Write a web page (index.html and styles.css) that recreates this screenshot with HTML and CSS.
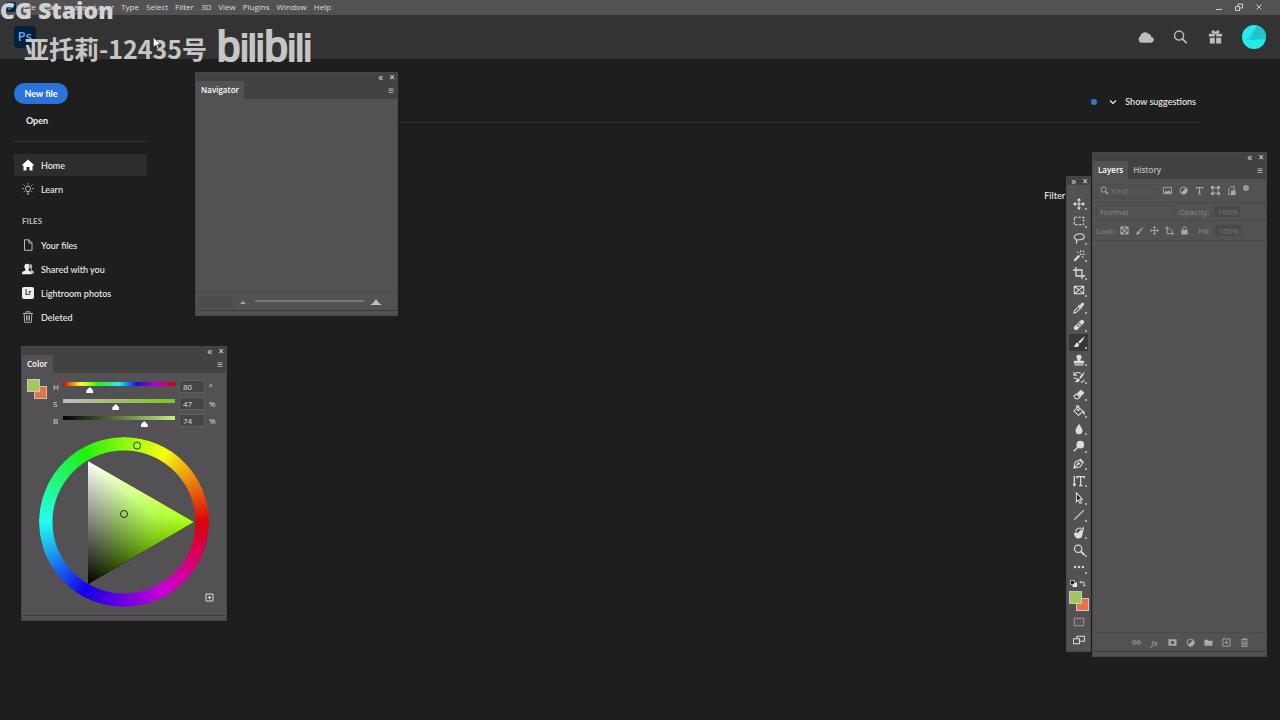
FILE: index.html
```html
<!DOCTYPE html>
<html lang="en">
<head>
  <meta charset="UTF-8">
  <meta name="viewport" content="width=device-width, initial-scale=1.0">
  <title>Photoshop</title>
  <link rel="stylesheet" href="styles.css">
</head>
<body>
  <header class="menubar">
    <svg class="app-icon" viewBox="0 0 10 10"><rect width="10" height="10" rx="2" fill="#0b2740"/><path d="M3 8V2h2a2 2 0 010 4H3" fill="none" stroke="#4aa5e8"/></svg>
    <nav class="menus">
      <a href="#">File</a>
      <a href="#">Edit</a>
      <a href="#">Image</a>
      <a href="#">Layer</a>
      <a href="#">Type</a>
      <a href="#">Select</a>
      <a href="#">Filter</a>
      <a href="#">3D</a>
      <a href="#">View</a>
      <a href="#">Plugins</a>
      <a href="#">Window</a>
      <a href="#">Help</a>
    </nav>
    <div class="window-buttons">
      <button aria-label="Minimize"><svg viewBox="0 0 10 10"><path d="M2 7.5h6"/></svg></button>
      <button aria-label="Restore"><svg viewBox="0 0 10 10"><path d="M1.500 4.500h4v4h-4zM4 4V2h4.500v4H6"/></svg></button>
      <button aria-label="Close"><svg viewBox="0 0 10 10"><path d="M2.500 2.500l5 5M7.500 2.500l-5 5"/></svg></button>
    </div>
  </header>

  <div class="topbar">
    <div class="ps-logo">Ps</div>
    <div class="topbar-actions">
      <button aria-label="Cloud"><svg viewBox="0 0 18 16"><path d="M4 14a4 4 0 01-.5-7A5 5 0 0112 4.500a3.500 3.500 0 013 3.500 3 3 0 01-.5 6z" fill="#bdbdbd"/></svg></button>
      <button aria-label="Search"><svg viewBox="0 0 18 16"><circle cx="7.500" cy="6.500" r="4.800" fill="none" stroke="#bdbdbd" stroke-width="1.500"/><path d="M11 10l4.500 4.500" stroke="#bdbdbd" stroke-width="1.800"/></svg></button>
      <button aria-label="What's new"><svg viewBox="0 0 18 16"><path d="M2 4.500h6.300v3H2zm7.700 0H16v3H9.700zM3 8.700h5.300V15H3zm6.700 0H15V15H9.700z" fill="#bdbdbd"/><path d="M9 4C6 4 5 3 5.500 2S8 1.500 9 4c1-2.500 3-3 3.500-2S12 4 9 4z" fill="none" stroke="#bdbdbd" stroke-width="1.400"/></svg></button>
      <button class="avatar" aria-label="Account"><svg viewBox="0 0 24 24"><circle cx="12" cy="12" r="12" fill="#27eaea"/><path d="M15 .4A12 12 0 0124 14L8 15z" fill="#22c3cc"/><path d="M15 .4L4 15h4z" fill="#1fdadd"/></svg></button>
    </div>
  </div>

  <div class="home">
    <aside class="sidebar">
      <button class="new-file">New file</button>
      <button class="open-file">Open</button>
      <nav class="side-nav">
        <a class="active" href="#"><svg viewBox="0 0 12 12"><path d="M6 .5L12 6l-.8.8H10.500V11.500h-3V8h-3v3.500h-3V6.800H.8L0 6z" fill="#fff"/></svg>Home</a>
        <a href="#"><svg viewBox="0 0 12 12"><path d="M4.800 8.500c0-1-1.300-1.600-1.300-3a2.500 2.500 0 015 0c0 1.400-1.300 2-1.300 3zM5 10h2M5.300 11.300h1.400M6 .2v1.300M.3 5.500h1.500M10.200 5.500h1.500M1.500 1.500l1.200 1.200M10.500 1.500L9.300 2.700M1.800 9l1-.8M10.200 9l-1-.8" fill="none" stroke="#ccc" stroke-width=".9"/></svg>Learn</a>
      </nav>
      <h2 class="side-title">FILES</h2>
      <nav class="side-nav">
        <a href="#"><svg viewBox="0 0 12 12"><path d="M2.500 .8h4.500l3 3v7.500H2.500zM6.800 1v3H10" fill="none" stroke="#ccc" stroke-width=".9"/></svg>Your files</a>
        <a href="#"><svg viewBox="0 0 12 12"><path d="M7.500 1c2 0 2.700 1.200 2.700 2.700 0 1.300-.5 2-.9 2.600.2 1 2.700 1.300 2.700 3.500v.7H9.500z" fill="#bbb"/><path d="M5 .8c1.800 0 2.600 1.200 2.600 2.800 0 1.400-.6 2.300-1.100 2.800v.8C7 7.800 9.700 8 9.700 10.300v.9H0v-.9C0 8 2.900 7.800 3.500 7.200v-.8c-.5-.5-1.100-1.400-1.100-2.800C2.400 2 3.200.8 5 .8z" fill="#eee"/></svg>Shared with you</a>
        <a href="#"><span class="lr-icon">Lr</span>Lightroom photos</a>
        <a href="#"><svg viewBox="0 0 12 12"><path d="M1 2.500h10M4 2.300V.8h4v1.500M2.200 2.700l.5 8.600h6.600l.5-8.600M4.500 4.300v5.300M6 4.300v5.300M7.500 4.300v5.300" fill="none" stroke="#bbb" stroke-width=".9"/></svg>Deleted</a>
      </nav>
    </aside>
    <main class="content">
      <div class="suggestions">
        <span class="dot"></span>
        <button class="show-suggestions"><svg viewBox="0 0 8 8"><path d="M1 2.500l3 3 3-3" fill="none" stroke="#eee" stroke-width="1.200"/></svg>Show suggestions</button>
      </div>
      <div class="filter-label">Filter</div>
    </main>
  </div>

  <!-- Floating panels -->
  <section class="panel navigator">
    <div class="panel-title"><button aria-label="Collapse">«</button><button aria-label="Close">×</button></div>
    <div class="tabs"><button class="tab selected">Navigator</button><button class="panel-menu" aria-label="Panel menu">≡</button></div>
    <div class="panel-body"></div>
    <div class="nav-footer">
      <input class="zoom-value" type="text" aria-label="Zoom" value="">
      <svg class="small-hill" viewBox="0 0 12 6"><path d="M1 6l3-2 2-3 2 3 3 2z" fill="#aaa"/></svg>
      <input class="zoom-range" type="range" aria-label="Zoom level">
      <svg class="big-hill" viewBox="0 0 12 6"><path d="M0 6l3-2 3-4 3 4 3 2z" fill="#bbb"/></svg>
    </div>
    <div class="panel-grip"></div>
  </section>

  <section class="panel color">
    <div class="panel-title"><button aria-label="Collapse">«</button><button aria-label="Close">×</button></div>
    <div class="tabs"><button class="tab selected">Color</button><button class="panel-menu" aria-label="Panel menu">≡</button></div>
    <div class="color-controls">
      <div class="swatches"><span class="back"></span><span class="front"></span></div>
      <div class="sliders">
        <div class="slider-row">
          <label for="hue">H</label>
          <input class="hue" id="hue" type="range" min="0" max="360" value="80">
          <input type="text" aria-label="Hue value" value="80">
          <span>°</span>
        </div>
        <div class="slider-row">
          <label for="sat">S</label>
          <input class="sat" id="sat" type="range" value="47">
          <input type="text" aria-label="Saturation value" value="47">
          <span>%</span>
        </div>
        <div class="slider-row">
          <label for="bri">B</label>
          <input class="bri" id="bri" type="range" value="74">
          <input type="text" aria-label="Brightness value" value="74">
          <span>%</span>
        </div>
      </div>
    </div>
    <div class="wheel">
      <svg viewBox="0 0 170 170">
        <defs>
          <linearGradient id="white" gradientUnits="userSpaceOnUse" x1="49" y1="24" x2="102" y2="115"><stop offset="0" stop-color="#fff"/><stop offset="1" stop-color="#000"/></linearGradient>
          <linearGradient id="lime" gradientUnits="userSpaceOnUse" x1="49" y1="85" x2="155" y2="85"><stop offset="0" stop-color="#000"/><stop offset=".6" stop-color="#70b80c"/><stop offset="1" stop-color="#aaff10"/></linearGradient>
        </defs>
        <g class="triangle">
          <path d="M49 24l106 61L49 147z" fill="url(#white)"/>
          <path class="add" d="M49 24l106 61L49 147z" fill="url(#lime)"/>
        </g>
        <circle cx="98" cy="8.500" r="3.500" fill="none" stroke="#25420a"/>
        <circle cx="85" cy="77" r="3.500" fill="none" stroke="#1d2a10"/>
      </svg>
    </div>
    <div class="color-footer"><button aria-label="Add to swatches"><svg viewBox="0 0 9 9"><path d="M1 1h7v7H1zM4.500 2.800v3.400M2.800 4.500h3.400" fill="none" stroke="#ddd"/></svg></button></div>
    <div class="panel-grip"></div>
  </section>

  <section class="panel tools">
    <div class="panel-title"><button aria-label="Expand">»</button><button aria-label="Close">×</button></div>
    <div class="tool-list">
      <button aria-label="Move"><svg viewBox="0 0 14 14"><path d="M7 2v10M2 7h10"/><path class="fill" d="M7 0l2.500 3h-5zM7 14l2.500-3h-5zM0 7l3-2.500v5zM14 7l-3-2.500v5z"/></svg></button>
      <button aria-label="Marquee"><svg viewBox="0 0 14 14"><path d="M1.500 2.500h11v9h-11z" stroke-dasharray="3 1.500"/></svg></button>
      <button aria-label="Lasso"><svg viewBox="0 0 14 14"><path d="M4 9C-1 7 2 2 8 2s7 6 1 7c-2 .5-4.500-.5-5 1s1.500 2-.5 3.500"/></svg></button>
      <button aria-label="Magic wand"><svg viewBox="0 0 14 14"><path d="M1.500 12.500l6-6" stroke-width="2.500"/><path d="M8.500 5.500l1-1" stroke-width="2"/><path d="M9 0v2.500M13.500 5H11M13 1l-1.500 1.500M12 9l-1.500-1.500M5 2l1.500 1.500"/></svg></button>
      <button aria-label="Crop"><svg viewBox="0 0 14 14"><path d="M3.500 0v10.500H14M0 3.500h10.500V14" stroke-width="1.500"/></svg></button>
      <button aria-label="Frame"><svg viewBox="0 0 14 14"><path d="M1.500 2.500h11v9h-11zM1.500 2.500l11 9M12.500 2.500l-11 9"/></svg></button>
      <button aria-label="Eyedropper"><svg viewBox="0 0 14 14"><path d="M1 13l1-3 4.500-4.500L8.500 7.500 4 12z"/><path class="fill" d="M6 4l1-1 1.200 1C9 2 11 0 12.500 1.500S12 5 10 6l1 1-1 1z"/></svg></button>
      <button aria-label="Healing brush"><svg viewBox="0 0 14 14"><path d="M3.500 10.500l7-7" stroke-width="5" stroke-linecap="round"/><path d="M4.500 6.500l3 3M6.500 4.500l3 3" stroke="#555"/></svg></button>
      <button class="current" aria-label="Brush"><svg viewBox="0 0 14 14"><path class="fill" d="M13.500.5C11 2 7 6 6.200 7.200l1.600 1.600C9 8 12.500 4 13.500.5zM5.500 8c-3-.5-2 3-5 4 2.500 1.500 7 1 6.500-2.500z"/></svg></button>
      <button aria-label="Clone stamp"><svg viewBox="0 0 14 14"><path class="fill" d="M7 1c2 0 3 1 3 2.500S8.500 6 8.500 8H13v3H1V8h4.500c0-2-1.500-3-1.500-4.500S5 1 7 1zM2 12h10v1.300H2z"/></svg></button>
      <button aria-label="History brush"><svg viewBox="0 0 14 14"><path class="fill" d="M13.500 1C11 3 8 6 7.500 7.500L9 9c1.500-1 4-5 4.500-8zM6.500 8.500c-3 0-1.500 3-4.500 4 3 1.500 6 0 6-2.500z"/><path d="M1 1v4h4M1.500 4.500C3 1.500 7 1 9 3M1 8c1 1 2 1 3 0M9 13c2 0 3.500-1 4-3"/></svg></button>
      <button aria-label="Eraser"><svg viewBox="0 0 14 14"><path d="M1 9.500L4 7l4 4-2 1.500H3z"/><path class="fill" d="M4.500 6.500L9 2l4.500 3.500-5 5z"/></svg></button>
      <button aria-label="Paint bucket"><svg viewBox="0 0 14 14"><path d="M1 7l5-5 5.500 5.500L6.500 12zM6 7L4 2.500C4 0 7 0 7 3v4"/><path class="fill" d="M11 6c3 1 3 3 2.500 6-1.500-1-1.500-2-2.500-4z"/></svg></button>
      <button aria-label="Blur"><svg viewBox="0 0 14 14"><path class="fill" d="M7 1c1.500 3 4 5 4 8a4 4 0 01-8 0c0-3 2.500-5 4-8z"/></svg></button>
      <button aria-label="Dodge"><svg viewBox="0 0 14 14"><circle class="fill" cx="8.500" cy="5.500" r="4.500"/><path d="M5.500 8.500L1 13" stroke-width="1.700"/></svg></button>
      <button aria-label="Pen"><svg viewBox="0 0 14 14"><path d="M1 13l1.500-7L8 3.500 11 7 8.500 11.500zM1 13l5-5M8 2l5 5"/><circle class="fill" cx="6.500" cy="7.500" r="1.500"/></svg></button>
      <button aria-label="Vertical type"><svg viewBox="0 0 14 14"><path d="M1.500 1v10M0 10.500l1.500 2 1.500-2M4.500 4V2h9v2M9 2v10M7 12.500h4" stroke-width="1.500"/></svg></button>
      <button aria-label="Path selection"><svg viewBox="0 0 14 14"><path d="M4 1l7 7.500H8l2 4-1.800.8-1.800-4L4 11.500z" fill="#1d1d1d"/></svg></button>
      <button aria-label="Line"><svg viewBox="0 0 14 14"><path d="M1.500 12.500l11-11"/></svg></button>
      <button aria-label="Rotate view"><svg viewBox="0 0 14 14"><path class="fill" d="M3 6l3 1 3-4 1.500 1 1.500-.5L11 9c-.5 3-2 4.500-5 4.500C3 13.500 1 9 1 7.500z"/><path d="M3 5c1-4 6-5 9-2V0M4 10c1 1 3 1 4-1"/></svg></button>
      <button aria-label="Zoom"><svg viewBox="0 0 14 14"><circle cx="6" cy="5.500" r="4.300" stroke-width="1.400"/><path d="M9 8.500l4.500 4.500" stroke-width="2"/></svg></button>
      <button aria-label="Edit toolbar"><svg viewBox="0 0 14 14"><circle class="fill" cx="2.500" cy="7" r="1.400"/><circle class="fill" cx="7" cy="7" r="1.400"/><circle class="fill" cx="11.500" cy="7" r="1.400"/></svg></button>
    </div>
    <div class="swap-row">
      <button aria-label="Default colors"><svg viewBox="0 0 8 8"><path d="M3 3h5v5H3z" fill="#eee"/><path d="M.5 .5h4.500v4.500H.5z" fill="#111" stroke="#ccc"/></svg></button>
      <button aria-label="Swap colors"><svg viewBox="0 0 8 8"><path d="M1 2.500h5V7M2.500 1L1 2.500 2.500 4M4.500 5.500L6 7l1.500-1.500" fill="none" stroke="#ddd"/></svg></button>
    </div>
    <div class="swatches"><span class="back"></span><span class="front"></span></div>
    <button class="mode" aria-label="Quick mask"><svg viewBox="0 0 14 14"><path d="M1.500 2.500h11v9h-11z" stroke="#999"/><circle cx="7" cy="7" r="2.500" stroke="#8a6262" stroke-dasharray="1 1"/></svg></button>
    <button class="mode" aria-label="Screen mode"><svg viewBox="0 0 14 14"><path d="M4.500 2.500h9v6h-9z"/><path d="M.5 5.500h7v6h-7z" fill="#535154"/></svg></button>
  </section>

  <section class="panel layers">
    <div class="panel-title"><button aria-label="Collapse">«</button><button aria-label="Close">×</button></div>
    <div class="tabs"><button class="tab selected">Layers</button><button class="tab">History</button><button class="panel-menu" aria-label="Panel menu">≡</button></div>
    <div class="layer-row filter-row">
      <div class="kind"><svg viewBox="0 0 10 10"><circle cx="4" cy="4" r="2.800"/><path d="M6 6l3 3" stroke-width="1.600"/></svg><input type="text" aria-label="Filter kind" value="Kind"></div>
      <div class="layer-icons">
        <svg viewBox="0 0 10 10"><path d="M.5 1.500h9v7h-9z"/><path class="fill" d="M1 8l2.500-3 1.500 1.500L7 4.500 9 8z"/></svg>
        <svg viewBox="0 0 10 10"><circle cx="5" cy="5" r="3.800"/><path class="fill" d="M8 2a4 4 0 01-6 6z"/></svg>
        <svg viewBox="0 0 10 10"><path d="M1.500 3V1.700h7V3M5 2v6.500M3.500 8.500h3" stroke-width="1.300"/></svg>
        <svg viewBox="0 0 10 10"><path d="M2 2h6v6H2z"/><path class="fill" d="M0 0h3v3H0zM7 0h3v3H7zM0 7h3v3H0zM7 7h3v3H7z"/></svg>
        <svg viewBox="0 0 10 10"><path d="M2 9.500V3l2.500-2.500H8V5M2 9.500h3"/><path class="fill" d="M4.500 5h5v5h-5z"/></svg>
      </div>
      <span class="filter-dot"></span>
    </div>
    <div class="layer-row">
      <select aria-label="Blend mode"><option>Normal</option></select>
      <label for="opacity">Opacity:</label>
      <input class="percent" id="opacity" type="text" value="100%">
    </div>
    <div class="layer-row lock-row">
      <span>Lock:</span>
      <div class="layer-icons">
        <svg viewBox="0 0 10 10"><path d="M1 1h8v8H1z"/><path class="fill" d="M1 1h2.700v2.700H1zM6.300 1H9v2.700H6.300zM3.700 3.700h2.600v2.600H3.700zM1 6.300h2.700V9H1zM6.300 6.300H9V9H6.300z"/></svg>
        <svg viewBox="0 0 10 10"><path class="fill" d="M9.500.5L4.500 5 6 6.500zM4 5.500C2 5.500 3 8 .5 9c2 1 5 .5 5-2z"/></svg>
        <svg viewBox="0 0 10 10"><path d="M5 1v8M1 5h8M3.500 2L5 .5 6.500 2M3.500 8L5 9.500 6.500 8M2 3.500L.5 5 2 6.500M8 3.500L9.500 5 8 6.500"/></svg>
        <svg viewBox="0 0 10 10"><path d="M2.500 0v8.500H10M0 2.500h5l3 3V10"/></svg>
        <svg viewBox="0 0 10 10"><path d="M3 5V3a2 2 0 014 0v2"/><path class="fill" d="M1.500 4.500h7v5h-7z"/></svg>
      </div>
      <label for="fill">Fill:</label>
      <input class="percent" id="fill" type="text" value="100%">
    </div>
    <div class="panel-body"></div>
    <div class="layers-footer">
      <button aria-label="Link layers"><svg viewBox="0 0 10 10"><circle cx="2.500" cy="5" r="1.900"/><circle cx="7.500" cy="5" r="1.900"/></svg></button>
      <button class="fx" aria-label="Layer style">fx</button>
      <button aria-label="Add mask"><svg viewBox="0 0 10 10"><path class="fill" fill-rule="evenodd" d="M.5 1.500h9v7h-9zM5 3a2 2 0 100 4 2 2 0 000-4z"/></svg></button>
      <button aria-label="Adjustment layer"><svg viewBox="0 0 10 10"><circle cx="5" cy="5" r="3.800"/><path class="fill" d="M8 2a4 4 0 01-6 6z"/></svg></button>
      <button aria-label="New group"><svg viewBox="0 0 10 10"><path class="fill" d="M.5 2h3.500l1 1h4.500v5.500h-9z"/></svg></button>
      <button aria-label="New layer"><svg viewBox="0 0 10 10"><path d="M1 1h8v8H1zM5 3v4M3 5h4"/></svg></button>
      <button aria-label="Delete layer"><svg viewBox="0 0 10 10"><path d="M1 2h8M3.500 2V.8h3V2M2.200 3v6.300h5.600V3M4.200 4v4M5.800 4v4"/></svg></button>
    </div>
    <div class="panel-grip"></div>
  </section>

  <!-- Video overlay -->
  <div class="station">CG Staion</div>
  <div class="uploader">
    <span lang="zh">亚托莉-12435号</span>
    <span class="bili"><b>b</b>ili<b>b</b>ili</span>
  </div>
  <svg class="pointer" viewBox="0 0 8 12"><path d="M.5 .5v9.500l2.500-2 1.500 3.500L6 11 4.500 7.500H7.500z" fill="#fff" stroke="#333" stroke-width=".5"/></svg>
</body>
</html>
```
FILE: styles.css
```css
* {
  box-sizing: border-box;
}
body {
  margin: 0;
  min-height: 100vh;
  position: relative;
  overflow: hidden;
  background-color: #1e1e1e;
  color: #eee;
  font-family: "Open Sans", "Noto Sans", sans-serif;
  font-size: 8px;
}
button, input, select {
  font: inherit;
  color: inherit;
  border: none;
  margin: 0;
  padding: 0;
  background: none;
}
a {
  color: inherit;
  text-decoration: none;
}
svg {
  display: block;
  flex: none;
}

/* Menu bar */
.menubar {
  display: flex;
  align-items: center;
  height: 15px;
  padding: 0 16px 2px 6px;
  background-color: #535154;
}
.app-icon {
  width: 10px;
  height: 10px;
}
.menus {
  display: flex;
  gap: 7px;
  margin-left: 7px;
  color: #ddd;
}
.window-buttons {
  display: flex;
  gap: 10px;
  margin-left: auto;
}
.window-buttons svg {
  width: 10px;
  height: 10px;
  fill: none;
  stroke: #ccc;
}

/* Top bar */
.topbar {
  display: flex;
  align-items: center;
  justify-content: space-between;
  height: 44px;
  padding: 0 14px;
  background-color: #333;
}
.ps-logo {
  width: 22px;
  height: 22px;
  border-radius: 4px;
  background-color: #06203b;
  color: #55aef5;
  font-size: 13px;
  font-weight: 600;
  line-height: 21px;
  text-align: center;
}
.topbar-actions {
  display: flex;
  align-items: center;
  gap: 18px;
}
.topbar-actions svg {
  width: 17px;
  height: 16px;
}
.topbar-actions .avatar svg {
  width: 24px;
  height: 24px;
}

/* Home screen */
.home {
  display: flex;
  font-family: Lato, "Open Sans", sans-serif;
  font-size: 9px;
  font-weight: 500;
}
.sidebar {
  width: 147px;
  padding: 24px 0 0 14px;
}
.new-file {
  display: block;
  width: 54px;
  height: 21px;
  border-radius: 11px;
  background-color: #2b72dc;
  color: #fff;
  font-weight: bold;
}
.open-file {
  display: block;
  width: 46px;
  height: 32px;
  font-weight: bold;
}
.side-nav a {
  display: flex;
  align-items: center;
  gap: 7px;
  height: 22px;
  margin-bottom: 2px;
  padding-left: 8px;
}
.side-nav svg, .lr-icon {
  width: 12px;
  height: 12px;
}
.open-file + .side-nav {
  padding-top: 12px;
  border-top: 1px solid #333;
  margin-top: 5px;
}
.side-nav .active {
  background-color: #2d2d2d;
}
.lr-icon {
  border-radius: 2px;
  background-color: #eee;
  color: #222;
  font-size: 7px;
  font-weight: bold;
  line-height: 11px;
  text-align: center;
}
.side-title {
  margin: 16px 0 8px 8px;
  color: #bbb;
  font-size: 8px;
  font-weight: bold;
  line-height: 10px;
}
.content {
  flex: 1;
  padding: 24px 80px 0 48px;
}
.suggestions {
  display: flex;
  align-items: center;
  justify-content: flex-end;
  gap: 12px;
  height: 40px;
  padding: 0 4px 2px 0;
  border-bottom: 1px solid #303030;
}
.dot {
  width: 6px;
  height: 6px;
  border-radius: 50%;
  background-color: #3878c8;
}
.show-suggestions {
  display: flex;
  align-items: center;
  gap: 8px;
}
.show-suggestions svg {
  width: 8px;
  height: 8px;
}
.filter-label {
  margin-top: 67px;
  padding-right: 135px;
  text-align: right;
}

/* Panels */
.panel {
  position: absolute;
  display: flex;
  flex-direction: column;
  background-color: #535154;
  border: 1px solid #484848;
}
.panel-title {
  display: flex;
  align-items: center;
  justify-content: flex-end;
  gap: 6px;
  height: 8px;
  padding: 0 2px 1px 0;
  background-color: #424242;
  font-size: 10px;
  line-height: 8px;
  color: #ddd;
}
.tabs {
  display: flex;
  height: 18px;
  background-color: #424242;
  font-weight: 600;
  flex: none;
}
.tab {
  padding: 0 5px 2px;
  color: #bbb;
}
.tab.selected {
  background-color: #535154;
  color: #fff;
}
.panel-menu {
  margin-left: auto;
  padding: 0 3px 1px 0;
  color: #bbb;
  font-size: 10px;
}
.panel-body {
  flex: 1;
}
.panel-grip {
  height: 5px;
  border-top: 1px solid #3c3c3c;
}

.navigator {
  left: 195px;
  top: 72px;
  width: 203px;
  height: 244px;
}
.nav-footer {
  display: flex;
  align-items: center;
  gap: 6px;
  height: 18px;
  padding: 0 15px 0 2px;
  border-top: 1px solid #4a4a4c;
}
.zoom-value {
  width: 35px;
  height: 12px;
  background-color: #4c4c4e;
}
.small-hill {
  width: 8px;
  height: 4px;
}
.big-hill {
  width: 12px;
  height: 6px;
}
.zoom-range {
  appearance: none;
  flex: 1;
  min-width: 0;
  height: 2px;
  margin: 0 0 2px 2px;
  background-color: #777;
}
.zoom-range::-webkit-slider-thumb {
  appearance: none;
  width: 1px;
}

/* Color panel */
.color {
  left: 21px;
  top: 346px;
  width: 206px;
}
.color-controls {
  display: flex;
  gap: 6px;
  padding: 6px 10px 0 5px;
}
.swatches {
  display: grid;
  grid-template: 7px 13px / 7px 13px;
  width: 20px;
  height: 20px;
}
.swatches span {
  width: 13px;
  height: 13px;
  border: 1px solid #c8c8b8;
}
.front {
  grid-area: 1 / 1;
  background-color: #a0c85c;
}
.back {
  grid-area: 2 / 2;
  background-color: #e27448;
}
.sliders {
  flex: 1;
  display: grid;
  row-gap: 3px;
}
.slider-row {
  display: grid;
  grid-template-columns: 6px 112px 26px 8px;
  column-gap: 4px;
  align-items: center;
  height: 14px;
  color: #ddd;
}
.slider-row input[type="range"] {
  appearance: none;
  width: 112px;
  height: 14px;
}
.slider-row input[type="range"]::-webkit-slider-runnable-track {
  height: 14px;
  background: var(--track) 0 3px / 100% 4px no-repeat;
}
.slider-row input[type="range"]::-webkit-slider-thumb {
  appearance: none;
  width: 7px;
  height: 6px;
  margin-top: 8px;
  background-color: #fff;
  clip-path: polygon(50% 0, 100% 60%, 100% 100%, 0 100%, 0 60%);
}
.hue {
  --track: linear-gradient(to right, #d00, #ff2 16%, #2e2 33%, #2ee 50%, #11d 66%, #b0c 83%, #c01);
}
.sat {
  --track: linear-gradient(to right, #bdbdbd, #7fc41c);
}
.bri {
  --track: linear-gradient(to right, #000, #bdf080);
}
.slider-row input[type="text"] {
  width: 26px;
  height: 13px;
  padding-left: 3px;
  border: 1px solid #5e5e60;
  background-color: #454547;
}
.wheel {
  position: relative;
  width: 170px;
  height: 170px;
  margin: 10px 0 0 17px;
}
.wheel::before {
  content: "";
  position: absolute;
  inset: 0;
  border-radius: 50%;
  background: conic-gradient(from 90deg, #dc0008, #cc00d8 60deg, #1200e8 120deg, #22ffee 180deg, #20f010 240deg, #f4ff10 300deg, #dc0008);
  mask: radial-gradient(circle, transparent 71px, #000 72px);
}
.wheel svg {
  position: relative;
}
.triangle {
  isolation: isolate;
}
.add {
  mix-blend-mode: plus-lighter;
}
.color-footer {
  display: flex;
  justify-content: flex-end;
  height: 9px;
  margin-top: -14px;
  margin-bottom: 13px;
  padding-right: 12px;
}
.color-footer svg {
  width: 9px;
  height: 9px;
}

/* Tools */
.tools {
  top: 176px;
  right: 189px;
  width: 25px;
  padding-bottom: 2px;
}
.tool-list {
  display: grid;
  grid-template-rows: repeat(22, 1fr);
  height: 381px;
  margin-top: 10px;
}
.tool-list button {
  position: relative;
  margin: 0 2px;
  display: grid;
  place-items: center;
}
.tool-list button::after {
  content: "";
  position: absolute;
  right: 1px;
  bottom: 2px;
  width: 2px;
  height: 2px;
  background-color: #aaa;
}
.tool-list .current {
  background-color: #38383a;
}
.tool-list svg, .mode svg {
  width: 12px;
  height: 12px;
  fill: none;
  stroke: #ddd;
  stroke-width: 1.2;
}
.tools .fill {
  fill: #ddd;
  stroke: none;
}
.swap-row {
  display: flex;
  justify-content: space-between;
  padding: 4px 4px 0 3px;
}
.swap-row svg {
  width: 7px;
  height: 7px;
}
.tools .swatches {
  margin: 4px 0 2px 2px;
}
.mode {
  display: grid;
  place-items: center;
  height: 18px;
}

/* Layers */
.layers {
  top: 152px;
  right: 13px;
  bottom: 63px;
  width: 175px;
}
.layer-row {
  display: flex;
  align-items: center;
  gap: 5px;
  height: 18px;
  padding-left: 3px;
  border-bottom: 1px solid #48484a;
  color: #8c8c8c;
}
.layer-row.filter-row {
  height: 24px;
}
.lock-row {
  height: 20px;
}
.kind {
  display: flex;
  align-items: center;
  gap: 2px;
  width: 62px;
  height: 14px;
  padding-left: 3px;
  border: 1px solid #4b4b4d;
  color: #777;
}
.kind input {
  width: 40px;
}
.layer-row svg, .layers-footer svg {
  width: 9px;
  height: 9px;
  fill: none;
  stroke: #aaa;
}
.layers .fill {
  fill: #aaa;
  stroke: none;
}
.layer-icons {
  display: flex;
  gap: 7px;
}
.lock-row .layer-icons {
  gap: 6px;
  margin-right: 4px;
}
.filter-dot {
  width: 6px;
  height: 6px;
  margin: 0 0 6px 2px;
  border-radius: 50%;
  background-color: #999;
}
.layer-row select {
  appearance: none;
  width: 78px;
  height: 14px;
  padding-left: 3px;
  border: 1px solid #4b4b4d;
}
.percent {
  width: 26px;
  height: 11px;
  padding-left: 3px;
  background-color: #49494b;
  color: #777;
}
.layers-footer {
  display: flex;
  align-items: center;
  justify-content: flex-end;
  gap: 9px;
  height: 19px;
  padding-right: 17px;
  border-top: 1px solid #4a4a4c;
}
.fx {
  width: 9px;
  color: #aaa;
  font-style: italic;
}

/* Overlay */
.station {
  position: absolute;
  left: 0;
  top: 0;
  color: #d2d2d2;
  font-size: 23px;
  font-weight: 800;
  line-height: 20px;
}
.uploader {
  position: absolute;
  left: 24px;
  top: 25px;
  display: flex;
  align-items: center;
  gap: 10px;
  height: 46px;
  color: #c6c6c6;
  font: bold 25px/46px "Noto Sans CJK SC", sans-serif;
}
.bili {
  font-family: "Liberation Sans", sans-serif;
  font-size: 36px;
  font-weight: normal;
  -webkit-text-stroke: 2px #c6c6c6;
}
.bili b {
  font-size: 42px;
  font-weight: normal;
}
.pointer {
  position: absolute;
  left: 153px;
  top: 37px;
  width: 8px;
  height: 12px;
}
```
